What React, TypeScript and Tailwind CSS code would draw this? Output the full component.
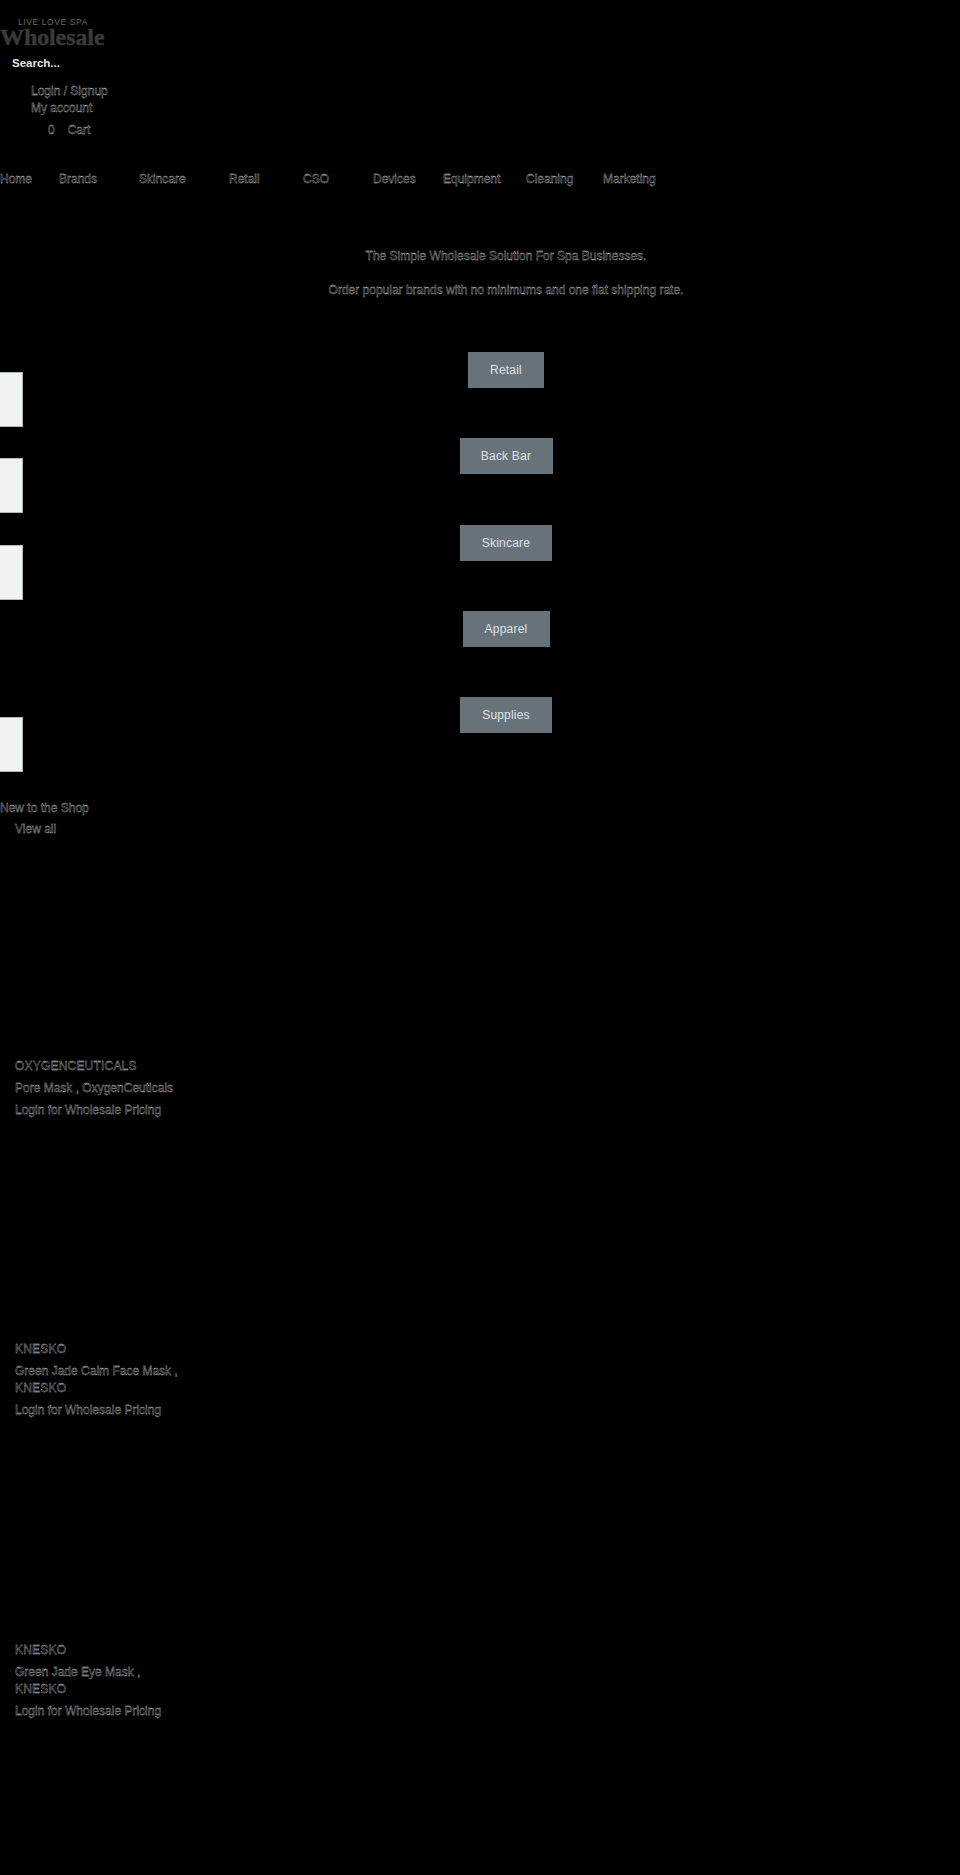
const outline = "text-black [-webkit-text-stroke:0.3px_#d4d4d4]";

const navItems = [
  { label: "Home", cls: "w-[59px]" },
  { label: "Brands", cls: "w-[80px]" },
  { label: "Skincare", cls: "w-[90px]" },
  { label: "Retail", cls: "w-[74px]" },
  { label: "CSO", cls: "w-[70px]" },
  { label: "Devices", cls: "w-[70px]" },
  { label: "Equipment", cls: "w-[83px]" },
  { label: "Cleaning", cls: "w-[77px]" },
  { label: "Marketing", cls: "w-[60px]" },
];

const products = [
  { brand: "OXYGENCEUTICALS", name: "Pore Mask , OxygenCeuticals", gap: "h-[220px]" },
  { brand: "KNESKO", name: "Green Jade Calm Face Mask ,", extra: "KNESKO", gap: "h-[222px]" },
  { brand: "KNESKO", name: "Green Jade Eye Mask ,", extra: "KNESKO", gap: "h-[223px]" },
];

function CategoryRow({ label, width, hasTile }: { label: string; width: string; hasTile: boolean }) {
  return (
    <div className="relative flex h-[36px] justify-center pl-[52px]">
      {hasTile && (
        <div className="absolute top-[20px] left-0 h-[55px] w-[23px] border-t border-r border-b border-[#b5b5b5] bg-[#f1f3f2]" />
      )}
      <a className={`flex items-center justify-center bg-[#68727a] text-[12px] tracking-[0.2px] text-[#dfe2e3] ${width}`}>
        {label}
      </a>
    </div>
  );
}

export default function App() {
  return (
    <div className="min-h-[1875px] bg-black font-['Liberation_Sans',sans-serif] text-[12px]">
      <header>
        <div className="h-[48px] pt-[17px]">
          <div className="pl-[18px] text-[8.5px] leading-[10px] tracking-[0.6px] text-[#6a6a6a]">LIVE LOVE SPA</div>
          <div className="-mt-[1px] font-['Liberation_Serif',serif] text-[24px] leading-[22px] font-bold tracking-[-0.1px] text-[#3a3a3a] [-webkit-text-stroke:0.4px_#3a3a3a]">
            Wholesale
          </div>
        </div>
        <div className="pt-[8px] pl-[12px] text-[11.5px] leading-[15px] font-bold text-[#e6e6e6]">Search...</div>
        <div className={`mt-[12px] pl-[31px] leading-[17px] ${outline}`}>
          <div>Login / Signup</div>
          <div>My account</div>
        </div>
        <div className={`mt-[5px] flex gap-[13px] pl-[48px] leading-[17px] ${outline}`}>
          <span>0</span>
          <span>Cart</span>
        </div>
      </header>

      <nav className={`mt-[32px] flex leading-[17px] ${outline}`}>
        {navItems.map((item) => (
          <a key={item.label} className={item.cls}>
            {item.label}
          </a>
        ))}
      </nav>

      <section className={`mt-[60px] pl-[52px] text-center leading-[17px] ${outline}`}>
        <p>The Simple Wholesale Solution For Spa Businesses.</p>
        <p className="mt-[17px]">Order popular brands with no minimums and one flat shipping rate.</p>
      </section>

      <section className="mt-[53.3px] flex flex-col gap-[50.2px]">
        <CategoryRow label="Retail" width="w-[76px]" hasTile />
        <CategoryRow label="Back Bar" width="w-[93px]" hasTile />
        <CategoryRow label="Skincare" width="w-[92px]" hasTile />
        <CategoryRow label="Apparel" width="w-[87px]" hasTile={false} />
        <CategoryRow label="Supplies" width="w-[92px]" hasTile />
      </section>

      <section className={`mt-[66.5px] leading-[17px] ${outline}`}>
        <h2>New to the Shop</h2>
        <a className="mt-[4px] block pl-[15px]">View all</a>
      </section>

      <section className={`leading-[17px] ${outline}`}>
        {products.map((p, i) => (
          <div key={i} className="pl-[15px]">
            <div className={p.gap} />
            <div className="tracking-[0.2px]">{p.brand}</div>
            <div className="mt-[5px]">{p.name}</div>
            {p.extra && <div className="tracking-[0.2px]">{p.extra}</div>}
            <div className="mt-[5px]">Login for Wholesale Pricing</div>
          </div>
        ))}
      </section>
    </div>
  );
}
